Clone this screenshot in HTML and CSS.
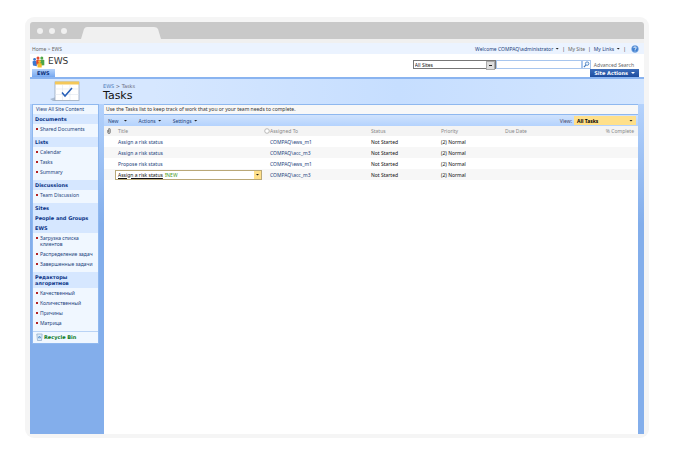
FILE: index.html
```html
<!DOCTYPE html>
<html lang="en">
<head>
<meta charset="utf-8">
<title>Tasks - EWS</title>
<link rel="stylesheet" href="styles.css">
</head>
<body>
<div class="browser">
  <div class="tabstrip">
    <span class="dot"></span><span class="dot"></span><span class="dot"></span>
    <svg class="tab" viewBox="0 0 80 12" aria-hidden="true"><path d="M0 12 L3 2 Q4 0 6 0 H73 Q76 0 77 2 L80 12Z" fill="#f0f0f0"/></svg>
  </div>
  <div class="page">
    <nav class="topbar">
      <div class="crumb"><a href="#">Home</a> &gt; <a href="#">EWS</a></div>
      <div class="userlinks">
        <button>Welcome COMPAQ\administrator<i class="arrow"></i></button><span>|</span>
        <a href="#" class="muted">My Site</a><span>|</span>
        <button>My Links<i class="arrow"></i></button><span>|</span>
        <a href="#" class="helplink" aria-label="Help"><svg class="help" viewBox="0 0 8 8"><circle cx="4" cy="4" r="3.4" fill="#3f7fd0" stroke="#86b0e6" stroke-width=".6"/><path d="M2.7 3.1Q2.8 1.9 4 1.9T5.3 3Q5.3 3.7 4 4.4V4.9M4 5.6V6.4" fill="none" stroke="#fff" stroke-width=".9"/></svg></a>
      </div>
    </nav>
    <header class="site">
      <div class="brand">
        <svg class="logo" viewBox="0 0 13 12" aria-hidden="true">
          <circle cx="2.600" cy="3.400" r="1.400" fill="#3b78cf"/><path d="M.5 5.500Q2.500 4.200 4.800 5.500V10.300L1 9.500Z" fill="#3b78cf"/>
          <circle cx="9.800" cy="2" r="1.500" fill="#4ca648"/><path d="M8 4Q10 3 12.300 4V9.300L8 9.500Z" fill="#4ca648"/>
          <circle cx="6" cy="2" r="1.500" fill="#e2492f"/><path d="M4.300 4Q6 3 8 4V8.500H4.300Z" fill="#e2492f"/>
          <circle cx="7.600" cy="5.600" r="1.400" fill="#f6bb2c"/><path d="M5.500 7.500Q7.500 6.300 9.700 7.500V11.500H5.500Z" fill="#f6bb2c"/>
        </svg>
        <span>EWS</span>
      </div>
      <form class="search">
        <span class="scope"><select aria-label="Search scope"><option>All Sites</option></select></span>
        <input type="text" aria-label="Search text">
        <button type="button" aria-label="Search"><svg viewBox="0 0 8 8"><circle cx="4.700" cy="3" r="2" fill="#e8f3ff" stroke="#3a73b8" stroke-width=".9"/><path d="M3.200 4.600L1 7" stroke="#3a73b8" stroke-width="1.200"/></svg></button>
        <a href="#">Advanced Search</a>
      </form>
      <a href="#" class="sitetab">EWS</a>
      <button class="siteactions">Site Actions<i class="arrow"></i></button>
    </header>
    <div class="titlebar">
      <svg class="listicon" viewBox="0 0 30 22" aria-hidden="true">
        <path d="M0 19L6 17V21H3Z" fill="#a9bbd2"/><rect x="5" y="2" width="24" height="18.500" fill="#fff" stroke="#9aa9bd" stroke-width=".8"/>
        <rect x="5" y="1.500" width="24" height="3" fill="#f4c85a"/><path d="M5 9H29M5 14.500H29M12.500 5V20M20 5V20" stroke="#dfe5ee" stroke-width=".6"/>
        <path d="M12 12.500L15 16L22 8" fill="none" stroke="#2860b8" stroke-width="1.500"/>
      </svg>
      <div class="heading"><div class="path"><a href="#">EWS</a> &gt; Tasks</div><h1>Tasks</h1></div>
    </div>
    <div class="columns">
      <aside class="side">
        <div class="quick">
          <a class="all" href="#">View All Site Content</a>
          <h2>Documents</h2>
          <ul><li><a href="#">Shared Documents</a></li></ul>
          <h2>Lists</h2>
          <ul><li><a href="#">Calendar</a></li><li><a href="#">Tasks</a></li><li><a href="#">Summary</a></li></ul>
          <h2>Discussions</h2>
          <ul><li><a href="#">Team Discussion</a></li></ul>
          <h2>Sites</h2>
          <h2>People and Groups</h2>
          <h2>EWS</h2>
          <ul><li><a href="#">Загрузка списка<br>клиентов</a></li><li><a href="#">Распределение задач</a></li><li><a href="#">Завершенные задачи</a></li></ul>
          <h2>Редакторы<br>алгоритмов</h2>
          <ul><li><a href="#">Качественный</a></li><li><a href="#">Количественный</a></li><li><a href="#">Причины</a></li><li><a href="#">Матрица</a></li></ul>
          <a class="bin" href="#"><svg viewBox="0 0 7 8" aria-hidden="true"><path d="M.8 1H6.200L5.500 7.500H1.500Z" fill="#dcebf8" stroke="#7c9cbd" stroke-width=".6"/><path d="M2.300 4.800L3.500 3L4.700 4.800Z" fill="none" stroke="#3f83c6" stroke-width=".7"/></svg>Recycle Bin</a>
        </div>
      </aside>
      <main class="main">
        <p class="desc">Use the Tasks list to keep track of work that you or your team needs to complete.</p>
        <div class="toolbar">
          <button class="new">New<i class="arrow"></i></button>
          <button>Actions<i class="arrow"></i></button>
          <button>Settings<i class="arrow"></i></button>
          <span class="viewlabel">View:</span>
          <button class="view">All Tasks<i class="arrow"></i></button>
        </div>
        <table>
          <colgroup><col class="c1"><col class="c2"><col class="c3"><col class="c4"><col class="c5"><col class="c6"><col></colgroup>
          <thead><tr>
            <th><svg class="clip" viewBox="0 0 4 6" aria-label="Attachments"><path d="M.7 2V4.500Q.7 5.500 2 5.500T3.300 4.500V1.500Q3.300.5 2.300.5T1.500 1.500V4" fill="#bbb" stroke="#777" stroke-width=".8"/></svg></th>
            <th>Title</th><th><svg class="presence" viewBox="0 0 6 6" aria-hidden="true"><circle cx="3" cy="3" r="2.300" fill="#fff" stroke="#aaa" stroke-width=".8"/></svg>Assigned To</th><th>Status</th><th>Priority</th><th>Due Date</th><th class="num">% Complete</th>
          </tr></thead>
          <tbody>
            <tr><td></td><td><a href="#">Assign a risk status</a></td><td class="who"><a href="#">COMPAQ\ews_m1</a></td><td>Not Started</td><td>(2) Normal</td><td></td><td></td></tr>
            <tr><td></td><td><a href="#">Assign a risk status</a></td><td class="who"><a href="#">COMPAQ\acc_m3</a></td><td>Not Started</td><td>(2) Normal</td><td></td><td></td></tr>
            <tr><td></td><td><a href="#">Propose risk status</a></td><td class="who"><a href="#">COMPAQ\ews_m1</a></td><td>Not Started</td><td>(2) Normal</td><td></td><td></td></tr>
            <tr><td></td><td><div class="picked"><a href="#">Assign a risk status</a><span class="fresh"><b>!</b>NEW</span><button aria-label="Item menu"><i class="arrow"></i></button></div></td><td class="who"><a href="#">COMPAQ\acc_m3</a></td><td>Not Started</td><td>(2) Normal</td><td></td><td></td></tr>
          </tbody>
        </table>
      </main>
    </div>
  </div>
</div>
</body>
</html>
```
FILE: styles.css
```css
* { box-sizing: border-box; }
body { margin: 0; padding: 17px 25px; height: 100vh; background: #fff; font: 5px/6px "Noto Sans", sans-serif; color: #333; }
a { color: #24437c; text-decoration: none; }
button { border: 0; padding: 0; background: none; font: inherit; color: #24437c; display: flex; align-items: center; gap: 3px; white-space: nowrap; }
h1, h2, p, ul { margin: 0; padding: 0; font-size: inherit; }
svg { display: block; flex: none; }
.arrow { width: 4px; height: 2px; background: #222; clip-path: polygon(0 0, 100% 0, 50% 100%); flex: none; }

.browser { min-height: 100%; padding: 5px 5px 4px; background: #f5f5f5; border-radius: 9px; display: flex; flex-direction: column; }
.tabstrip { height: 17px; background: #c9c9c9; border-radius: 3px 3px 0 0; display: flex; align-items: center; gap: 6px; padding-left: 7px; flex: none; }
.dot { width: 6px; height: 6px; border-radius: 50%; background: #f0f0f0; }
.tab { width: 80px; height: 12px; margin-left: 8px; align-self: flex-end; }
.page { flex: 1; display: flex; flex-direction: column; border-top: 4px solid #f0f0f0; }

.topbar { height: 11px; background: #ebf3ff; display: flex; justify-content: space-between; align-items: center; padding: 0 5px 0 2px; }
.crumb, .crumb a { color: #666; }
.userlinks { display: flex; align-items: center; gap: 3px; }
.userlinks .muted { color: #666; }
.userlinks button { gap: 2px; }
.helplink { margin-left: 2px; }
.help { width: 8px; height: 8px; }

.site { height: 25px; display: grid; grid-template: 15px 8px / 1fr auto; border-bottom: 2px solid #8ab4f0; background: #fff; }
.brand { display: flex; align-items: center; gap: 3px; padding-left: 2px; font: 9px/11px "DejaVu Sans", sans-serif; }
.logo { width: 13px; height: 12px; }
.search { display: flex; align-items: center; padding-right: 10px; align-self: end; }
.scope { position: relative; display: flex; }
.scope::after { content: ""; position: absolute; right: 1px; top: 1px; width: 7px; height: 7px; background: linear-gradient(#222, #222) center / 3px 1px no-repeat #ddd; border: 1px solid #aaa; pointer-events: none; }
.search select { appearance: none; width: 83px; height: 9px; border: 1px solid #777; border-radius: 0; font: inherit; color: #111; padding: 0 1px; background: #fff; }
.search input { width: 86px; height: 9px; border: 1px solid #a8c6ee; padding: 0; font: inherit; }
.search button { width: 9px; height: 9px; border: 1px solid #a8c6ee; }
.search button svg { width: 7px; height: 7px; }
.search a { color: #666; margin-left: 3px; }
.sitetab, .siteactions, h2, .quick .bin { font-family: "DejaVu Sans", sans-serif; font-weight: 700; }
.sitetab { justify-self: start; margin-left: 2px; padding: 1px 5px; background: linear-gradient(#b5d3fb, #76a8f0); color: #0b2f78; }
.siteactions { justify-self: end; margin-right: 5px; padding: 0 4px; background: linear-gradient(#3c6dbb, #1d4c9e); color: #fff; }
.siteactions .arrow { background: #fff; }

.titlebar { height: 25px; display: grid; grid-template-columns: 73px 1fr; background: linear-gradient(90deg, #d6e7ff 20%, #c6deff 60%, #d2e5ff); }
.listicon { width: 30px; height: 22px; margin: 1px 0 0 20px; }
.heading { font-family: "DejaVu Sans", sans-serif; }
.path { margin-top: 4px; color: #667; }
.path a { color: #4a78b8; }
h1 { font-size: 11px; line-height: 13px; font-weight: 400; color: #111; }

.columns { flex: 1; display: grid; grid-template-columns: 74px 1fr; padding-right: 6px; background: linear-gradient(#b4d2fc, #83aeeb 120px); }
.side { padding: 0 5px 0 2px; }
.quick { border: 1px solid #8fb8ef; background: #f0f7ff; }
.quick a { color: #24437c; }
.quick .all { display: block; padding: 1px 3px 2px; }
h2 { padding: 2px; background: #d6e7ff; color: #0b3487; }
ul { list-style: none; padding-bottom: 3px; }
li { padding: 2px 0 2px 7px; white-space: nowrap; background: radial-gradient(circle at 4px 5px, #b22222 1px, transparent 1px); }
.quick .bin { display: flex; align-items: center; gap: 1px; padding: 1px 3px 2px; border-top: 1px solid #b9d3f5; color: #0a7a1c; }
.bin svg { width: 7px; height: 8px; }

.main { background: #fff; border-top: 1px solid #8fb8ef; }
.desc { padding: 1px 2px; height: 9px; background: #f8f8f8; }
.toolbar { height: 12px; display: flex; align-items: center; gap: 11px; padding: 0 2px 0 4px; background: linear-gradient(#d0e3fd, #b4d2fd); border-top: 1px solid #8fb8ef; }
.toolbar button { gap: 2px; }
.toolbar .new { gap: 5px; }
.viewlabel { margin-left: auto; color: #446; }
.toolbar .view { width: 62px; height: 9px; margin-left: -9px; padding: 0 3px; background: #ffe08a; color: #000; font-weight: 700; justify-content: space-between; }

table { width: 100%; table-layout: fixed; border-collapse: collapse; }
.c1 { width: 11px; } .c2 { width: 149px; } .c3 { width: 104px; } .c4 { width: 70px; } .c5 { width: 64px; } .c6 { width: 65px; }
tr { height: 11px; }
thead tr { height: 10px; }
th { padding: 0 3px; text-align: left; font-weight: 400; color: #888; background: #f4f4f4; }
thead th:nth-child(3) { padding-left: 0; }
td { padding: 0 3px; color: #111; }
tbody tr:nth-child(even) { background: #f7f7f7; }
th svg { display: inline-block; vertical-align: middle; }
.clip { width: 4px; height: 6px; }
.presence { width: 6px; height: 6px; }
td.who { padding-left: 6px; }
th.num { text-align: right; padding-right: 4px; }
.picked { display: flex; align-items: center; height: 10px; margin: 0 -1px 0 -3px; padding-left: 2px; border: 1px solid #b9a878; background: #fff; }
.picked a { text-decoration: underline; color: #111; }
.fresh { color: #3f9a1c; margin-left: 2px; }
.picked button { width: 7px; height: 8px; margin-left: auto; justify-content: center; background: #ffe08a; }
```
